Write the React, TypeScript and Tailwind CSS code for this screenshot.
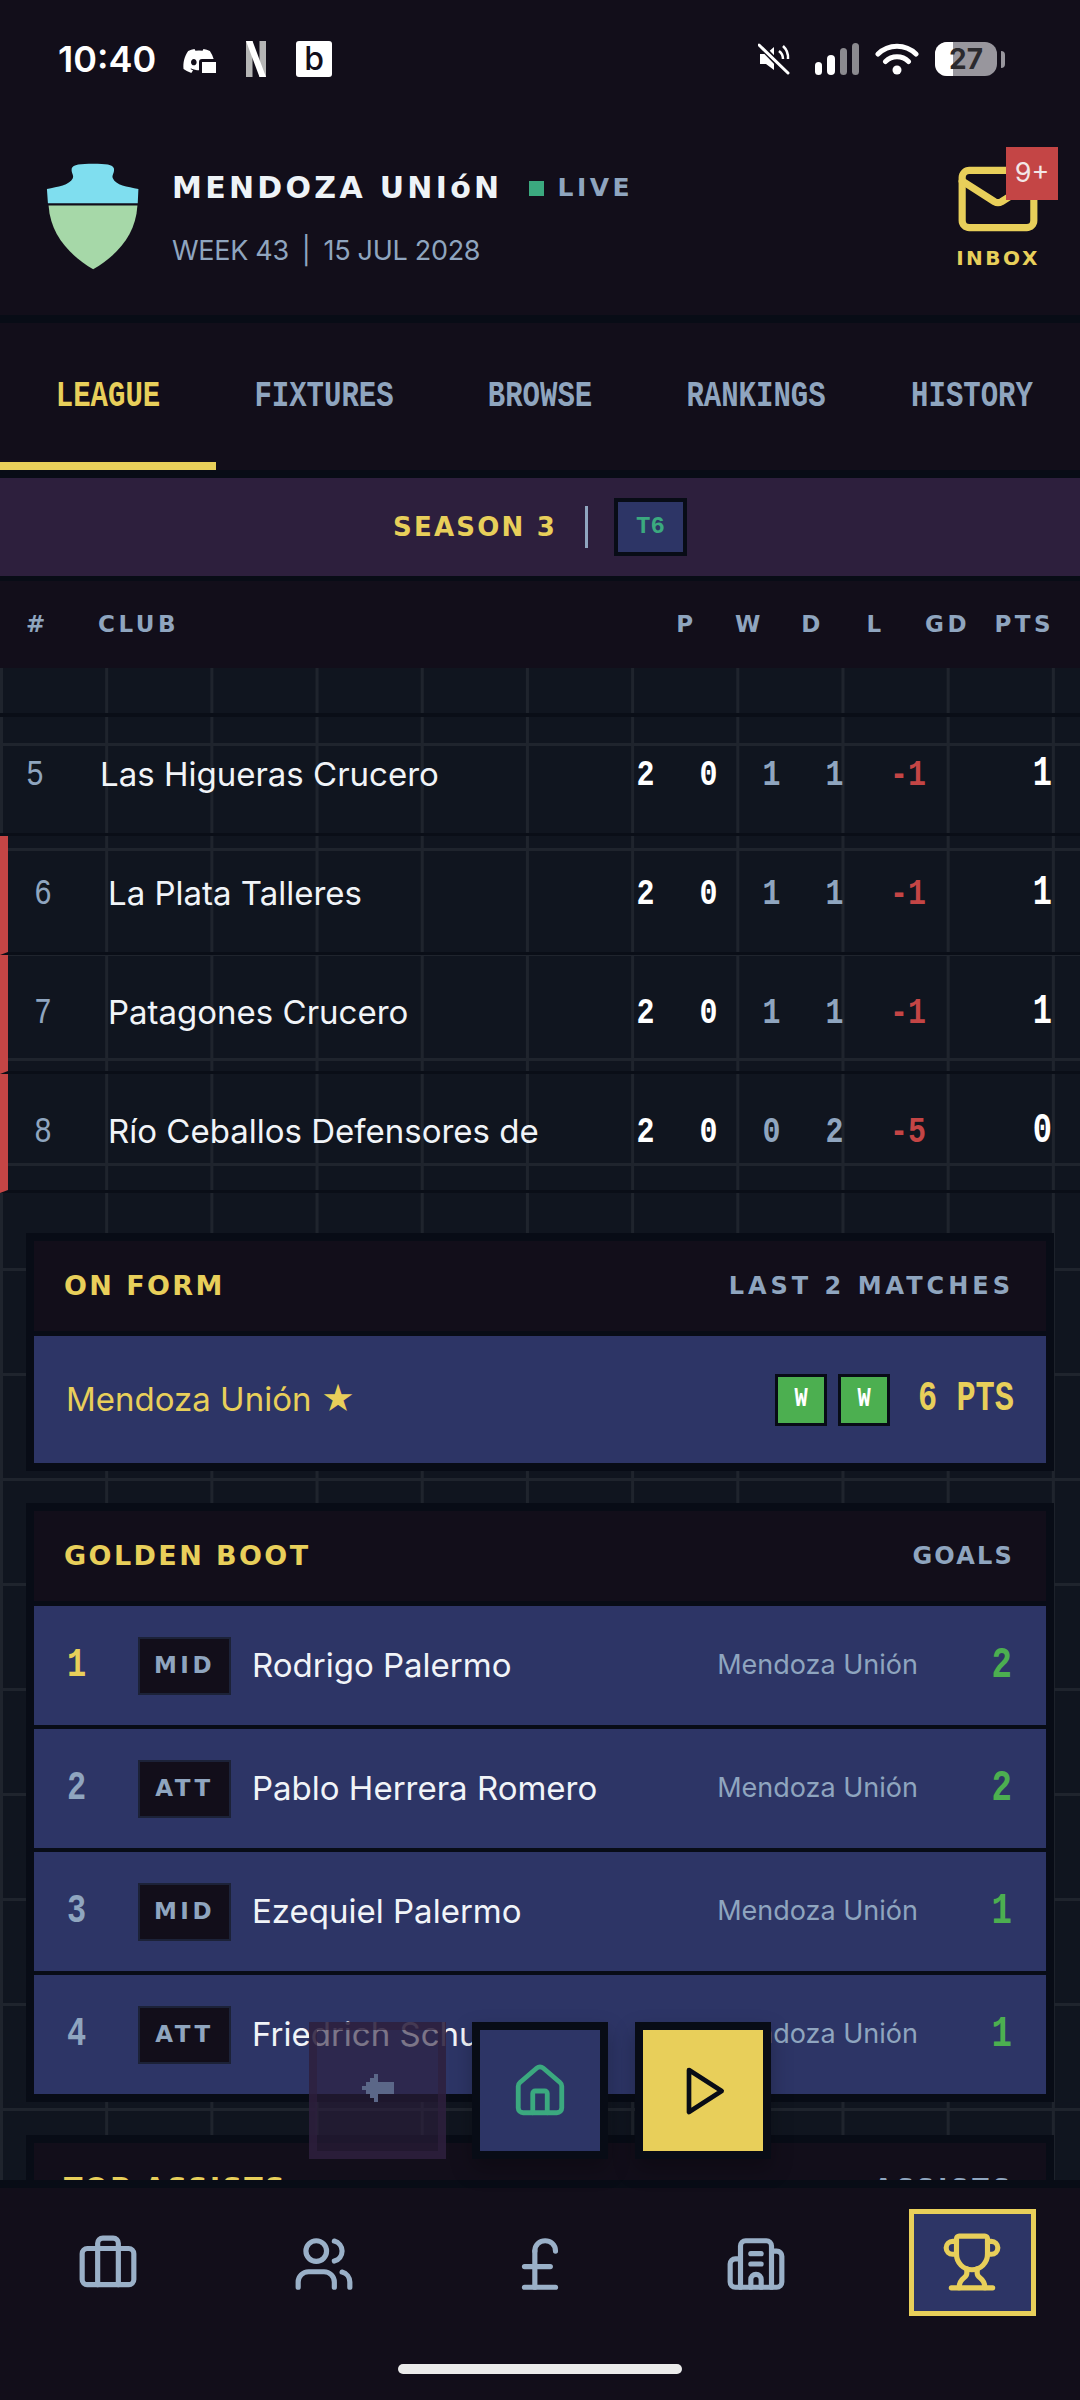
import React from "react";
import { Briefcase, Building2, House, Mail, PoundSterling, Trophy, Users } from "lucide-react";
import { FaDiscord } from "react-icons/fa";

// pixel headings, narrow terminal labels and body copy
const pixel = "font-['DejaVu_Sans',sans-serif] font-bold";
const term = "font-['Liberation_Mono',monospace]";
const body = "font-['Inter',sans-serif]";

const tabs = ["LEAGUE", "FIXTURES", "BROWSE", "RANKINGS", "HISTORY"];

const table = [
  { pos: 5, name: "Las Higueras Crucero", p: 2, w: 0, d: 1, l: 1, gd: "-1", pts: 1, drop: false },
  { pos: 6, name: "La Plata Talleres", p: 2, w: 0, d: 1, l: 1, gd: "-1", pts: 1, drop: true },
  { pos: 7, name: "Patagones Crucero", p: 2, w: 0, d: 1, l: 1, gd: "-1", pts: 1, drop: true },
  { pos: 8, name: "Río Ceballos Defensores de", p: 2, w: 0, d: 0, l: 2, gd: "-5", pts: 0, drop: true },
];

const scorers = [
  { pos: 1, role: "MID", name: "Rodrigo Palermo", goals: 2 },
  { pos: 2, role: "ATT", name: "Pablo Herrera Romero", goals: 2 },
  { pos: 3, role: "MID", name: "Ezequiel Palermo", goals: 1 },
  { pos: 4, role: "ATT", name: "Friedrich Schulz", goals: 1 },
];

function StatusBar() {
  return (
    <div className="flex h-[116px] items-center pl-[58px] pr-[75px] pt-[2px] text-white">
      <span className="font-['Inter',sans-serif] text-[36px] font-semibold">10:40</span>
      <div className="relative ml-[26px] h-[30px] w-[34px]">
        <FaDiscord className="h-[34px] w-[34px]" />
        <div className="absolute right-[-3px] top-[15px] h-[17px] w-[20px] rounded-[3px] border-[3px] border-[#120e1a] bg-white" />
      </div>
      <svg viewBox="0 0 20 36" className="ml-[30px] h-[36px] w-[20px]">
        <rect x="0" y="0" width="6.5" height="36" fill="#b5b5b5" />
        <rect x="13.5" y="0" width="6.5" height="36" fill="#b5b5b5" />
        <polygon points="0,0 6.5,0 20,36 13.5,36" fill="#fff" />
      </svg>
      <div className={`ml-[30px] flex h-[36px] w-[36px] items-center justify-center rounded-[3px] bg-white text-[32px] font-medium text-[#120e1a] ${body}`}>
        b
      </div>
      <div className="flex-1" />
      <svg viewBox="0 0 32 32" className="h-[32px] w-[32px]">
        <path d="M2 11h6l8-7v23l-8-6H2z" fill="#fff" />
        <path d="M21 8a10 10 0 0 1 4 8M25 3a16 16 0 0 1 5 13" stroke="#fff" strokeWidth="2.5" fill="none" />
        <path d="M2 2l28 29" stroke="#120e1a" strokeWidth="6" />
        <path d="M1 2l29 28" stroke="#fff" strokeWidth="3" strokeLinecap="round" />
      </svg>
      <div className="ml-[25px] flex items-end gap-[5px]">
        <div className="h-[13px] w-[7px] rounded-full bg-white" />
        <div className="h-[20px] w-[8px] rounded-full bg-white" />
        <div className="h-[27px] w-[7px] rounded-full bg-[#8b8a8f]" />
        <div className="h-[32px] w-[7px] rounded-full bg-[#8b8a8f]" />
      </div>
      <svg viewBox="0 0 44 32" className="ml-[16px] h-[32px] w-[44px]">
        <path d="M3 11a27 27 0 0 1 38 0M10.5 18.5a16.5 16.5 0 0 1 23 0" stroke="#fff" strokeWidth="5" strokeLinecap="round" fill="none" />
        <circle cx="22" cy="27" r="4.5" fill="#fff" />
      </svg>
      <div className="relative ml-[16px] flex h-[34px] w-[62px] items-center justify-center overflow-hidden rounded-[12px] bg-[#98969d]">
        <div className="absolute inset-y-0 left-0 w-[18px] bg-white" />
        <span className="relative font-['Inter',sans-serif] text-[28px] font-bold text-[#2b2a2e]">27</span>
      </div>
      <div className="ml-[4px] h-[17px] w-[4px] rounded-r-full bg-[#98969d]" />
    </div>
  );
}

function Crest() {
  return (
    <svg viewBox="45 38 280 324" className="h-[107px] w-[93px] shrink-0">
      <path
        d="M187 40C150 40 125 42 122 55C120 70 130 75 125 85C115 105 80 110 47 117L50 160H322L324 117C290 110 255 105 247 85C242 75 252 70 250 55C247 42 225 40 187 40Z"
        fill="#7fdeef"
      />
      <path d="M52 167C58 260 120 320 187 360C255 320 316 260 321 167Z" fill="#a6d8a8" />
    </svg>
  );
}

function Header() {
  return (
    <div className="relative flex h-[207px] items-start border-b-[8px] border-[#080c16] pl-[46px] pt-[47px]">
      <Crest />
      <div className="ml-[33px] pt-[10px]">
        <div className="flex items-center">
          <span className={`${pixel} text-[30px] leading-[30px] tracking-[3.3px] text-[#eef3f7]`}>MENDOZA UNIóN</span>
          <div className="ml-[26px] h-[15px] w-[15px] bg-[#3ba97f]" />
          <span className={`${pixel} ml-[14px] text-[25px] leading-[30px] tracking-[3.5px] text-[#8fa5bf]`}>LIVE</span>
        </div>
        <div className={`${body} mt-[30px] flex gap-[13px] text-[27px] leading-[36px] tracking-[-0.3px] text-[#8fa5bf]`}>
          <span>WEEK 43</span>
          <span>|</span>
          <span>15 JUL 2028</span>
        </div>
      </div>
      <div className="absolute left-[955px] top-[40px] flex w-[86px] flex-col items-center">
        <Mail size={86} strokeWidth={2} className="text-[#e8cf5a]" />
        <span className={`${pixel} mt-[6px] text-[20px] leading-[20px] tracking-[2.5px] text-[#e8cf5a]`}>INBOX</span>
      </div>
      <div className={`absolute left-[1006px] top-[31px] flex h-[53px] w-[52px] items-center justify-center bg-[#c44545] text-[27px] text-[#f2e6e6] ${body}`}>
        9+
      </div>
    </div>
  );
}

function Tabs() {
  return (
    <div className="flex h-[147px]">
      {tabs.map((t, i) => (
        <div
          key={t}
          className={`flex w-[216px] items-center justify-center border-b-[8px] pt-[8px] ${term} text-[29px] font-bold leading-none ${
            i === 0 ? "border-[#e8cf5a] text-[#e8cf5a]" : "border-transparent text-[#8fa5bf]"
          }`}
        >
          <span className="scale-y-[1.25]">{t}</span>
        </div>
      ))}
    </div>
  );
}

function SeasonBar() {
  return (
    <div className="flex h-[111px] items-center justify-center border-y-[8px] border-[#080c16] bg-[#2d1f3d] [border-bottom-width:5px]">
      <span className={`${pixel} text-[26px] tracking-[2.2px] text-[#e8cf5a]`}>SEASON 3</span>
      <div className="ml-[28px] h-[42px] w-[3px] bg-[#8fa5bf]" />
      <div className={`ml-[26px] flex h-[58px] w-[73px] items-center justify-center border-[4px] border-[#080c16] bg-[#2d3566] ${term} text-[24px] font-bold text-[#3ba97f]`}>
        T6
      </div>
    </div>
  );
}

function TableHead() {
  const cols = "w-[63px] text-center";
  return (
    <div className={`flex h-[87px] items-center pl-[26px] pr-[26px] ${pixel} text-[23px] tracking-[3.5px] text-[#8fa5bf]`}>
      <span className="w-[72px]">#</span>
      <span className="flex-1">CLUB</span>
      <span className={cols}>P</span>
      <span className={cols}>W</span>
      <span className={cols}>D</span>
      <span className={cols}>L</span>
      <span className="w-[63px] text-right">GD</span>
      <span className="w-[84px] text-right">PTS</span>
    </div>
  );
}

function TableRow({ row }: { row: (typeof table)[number] }) {
  const cell = `w-[63px] scale-y-[1.25] text-center ${term} text-[30px] font-bold`;
  return (
    <div
      className={`flex h-[119px] items-center border-b-[3px] border-[#0a0e17] pr-[28px] ${
        row.drop ? "border-l-[8px] border-l-[#c44545]" : ""
      }`}
    >
      <span className={`w-[100px] scale-y-[1.25] pl-[26px] ${term} text-[30px] text-[#8fa5bf]`}>{row.pos}</span>
      <span className={`min-w-0 flex-1 truncate ${body} text-[33px] text-[#f1f4f8]`}>{row.name}</span>
      <span className={`${cell} text-white`}>{row.p}</span>
      <span className={`${cell} text-white`}>{row.w}</span>
      <span className={`${cell} text-[#8fa5bf]`}>{row.d}</span>
      <span className={`${cell} text-[#8fa5bf]`}>{row.l}</span>
      <span className={`w-[60px] scale-y-[1.25] text-right ${term} text-[30px] font-bold text-[#c44545]`}>{row.gd}</span>
      <span className={`w-[126px] scale-y-[1.3] text-right ${term} text-[32px] font-bold text-white`}>{row.pts}</span>
    </div>
  );
}

function CardHeader({ title, right, spread }: { title: string; right: string; spread: string }) {
  return (
    <div className="flex h-[95px] items-center justify-between border-b-[5px] border-[#080c16] bg-[#120e1a] pl-[30px] pr-[32px]">
      <span className={`${pixel} text-[27px] tracking-[2.4px] text-[#e8cf5a]`}>{title}</span>
      <span className={`${pixel} text-[24px] ${spread} text-[#8fa5bf]`}>{right}</span>
    </div>
  );
}

function OnForm() {
  return (
    <div className="mx-[26px] mt-[40px] border-[8px] border-[#080c16]">
      <CardHeader title="ON FORM" right="LAST 2 MATCHES" spread="tracking-[4px]" />
      <div className="flex h-[127px] items-center bg-[#2d3566] pl-[32px] pr-[32px]">
        <span className={`flex-1 ${body} text-[33px] text-[#e8cf5a]`}>Mendoza Unión ★</span>
        {[0, 1].map((i) => (
          <div
            key={i}
            className={`ml-[11px] flex h-[52px] w-[52px] items-center justify-center border-[3px] border-[#080c16] bg-[#4caf50] ${term} text-[22px] font-bold text-white`}
          >
            <span className="scale-y-[1.25]">W</span>
          </div>
        ))}
        <span className={`ml-[28px] scale-y-[1.3] ${term} text-[32px] font-bold text-[#e8cf5a]`}>6 PTS</span>
      </div>
    </div>
  );
}

function GoldenBoot() {
  return (
    <div className="mx-[26px] mt-[32px] border-[8px] border-[#080c16] bg-[#080c16]">
      <CardHeader title="GOLDEN BOOT" right="GOALS" spread="tracking-[2.2px]" />
      <div className="flex flex-col gap-[4px]">
        {scorers.map((s) => (
          <div key={s.pos} className="flex h-[119px] items-center bg-[#2d3566] pl-[33px] pr-[34px]">
            <span className={`w-[71px] scale-y-[1.25] ${term} text-[32px] font-bold ${s.pos === 1 ? "text-[#e8cf5a]" : "text-[#8fa5bf]"}`}>{s.pos}</span>
            <div className={`flex h-[58px] w-[93px] items-center justify-center border-[2px] border-[#1c2238] bg-[#120e1a] ${pixel} text-[23px] tracking-[3.5px] text-[#8fa5bf]`}>
              {s.role}
            </div>
            <span className={`ml-[21px] flex-1 ${body} text-[33px] text-[#f1f4f8]`}>{s.name}</span>
            <span className={`${body} text-[27px] text-[#8fa5bf]`}>Mendoza Unión</span>
            <span className={`w-[94px] scale-y-[1.3] text-right ${term} text-[34px] font-bold text-[#4caf50]`}>{s.goals}</span>
          </div>
        ))}
      </div>
    </div>
  );
}

function FloatingButtons() {
  return (
    <div className="absolute left-[309px] top-[2022px] flex gap-[27px]">
      <div className="-mr-[1px] flex h-[137px] w-[137px] items-start justify-center border-[8px] border-[#2d1f3d]/70 bg-[#2d1f3d]/60 pt-[44px]">
        <svg viewBox="0 0 32 28" className="h-[28px] w-[32px]">
          <polygon points="0,12 4,12 4,8 8,8 8,4 12,4 12,0 16,0 16,8 32,8 32,20 16,20 16,28 12,28 12,24 8,24 8,20 4,20 4,16 0,16" fill="#5b6788" />
        </svg>
      </div>
      <div className="flex h-[137px] w-[136px] items-center justify-center border-[8px] border-[#080c16] bg-[#2d3566] shadow-[0_10px_20px_rgba(0,0,0,0.25)]">
        <House size={58} strokeWidth={2} className="text-[#3ba97f]" />
      </div>
      <div className="flex h-[137px] w-[136px] items-center justify-center border-[8px] border-[#080c16] bg-[#e8cf5a] shadow-[0_10px_20px_rgba(0,0,0,0.25)]">
        <svg viewBox="0 0 24 24" className="h-[56px] w-[56px]" fill="none" stroke="#080c16" strokeWidth="2" strokeLinejoin="round">
          <polygon points="6 3 20 12 6 21" />
        </svg>
      </div>
    </div>
  );
}

function BottomNav() {
  const cell = "flex w-[216px] items-center justify-center pt-[3px] text-[#9ab0c8]";
  return (
    <div className="relative h-[220px] shrink-0 border-t-[8px] border-[#080c16] bg-[#120e1a]">
      <div className="flex h-[148px]">
        <div className={cell}><Briefcase size={62} strokeWidth={2} /></div>
        <div className={cell}><Users size={62} strokeWidth={2} /></div>
        <div className={cell}><PoundSterling size={62} strokeWidth={2} /></div>
        <div className={cell}><Building2 size={62} strokeWidth={2} /></div>
        <div className="flex w-[216px] items-center justify-center">
          <div className="flex h-[107px] w-[127px] items-center justify-center border-[5px] border-[#e8cf5a] bg-[#2d3566]">
            <Trophy size={62} strokeWidth={2} className="text-[#e8cf5a]" />
          </div>
        </div>
      </div>
      <div className="mx-auto mt-[28px] h-[10px] w-[284px] rounded-full bg-[#ebebeb]" />
    </div>
  );
}

export default function App() {
  return (
    <div className="relative flex h-[2400px] w-[1080px] flex-col overflow-hidden bg-[#120e1a]">
      <StatusBar />
      <Header />
      <Tabs />
      <SeasonBar />
      <TableHead />
      <div className="min-h-0 flex-1 overflow-hidden bg-[#10151f] bg-[linear-gradient(to_right,#1f242d_3px,transparent_3px),linear-gradient(to_bottom,#1f242d_3px,transparent_3px)] bg-size-[105.2px_105px] bg-position-[0px_75px]">
        <div className="h-[49px] border-b-[4px] border-[#0a0e17]" />
        {table.map((row) => (
          <TableRow key={row.pos} row={row} />
        ))}
        <OnForm />
        <GoldenBoot />
        <div className="mx-[26px] mt-[33px] border-[8px] border-[#080c16]">
          <CardHeader title="TOP ASSISTS" right="ASSISTS" spread="tracking-[4px]" />
        </div>
      </div>
      <BottomNav />
      <FloatingButtons />
    </div>
  );
}
